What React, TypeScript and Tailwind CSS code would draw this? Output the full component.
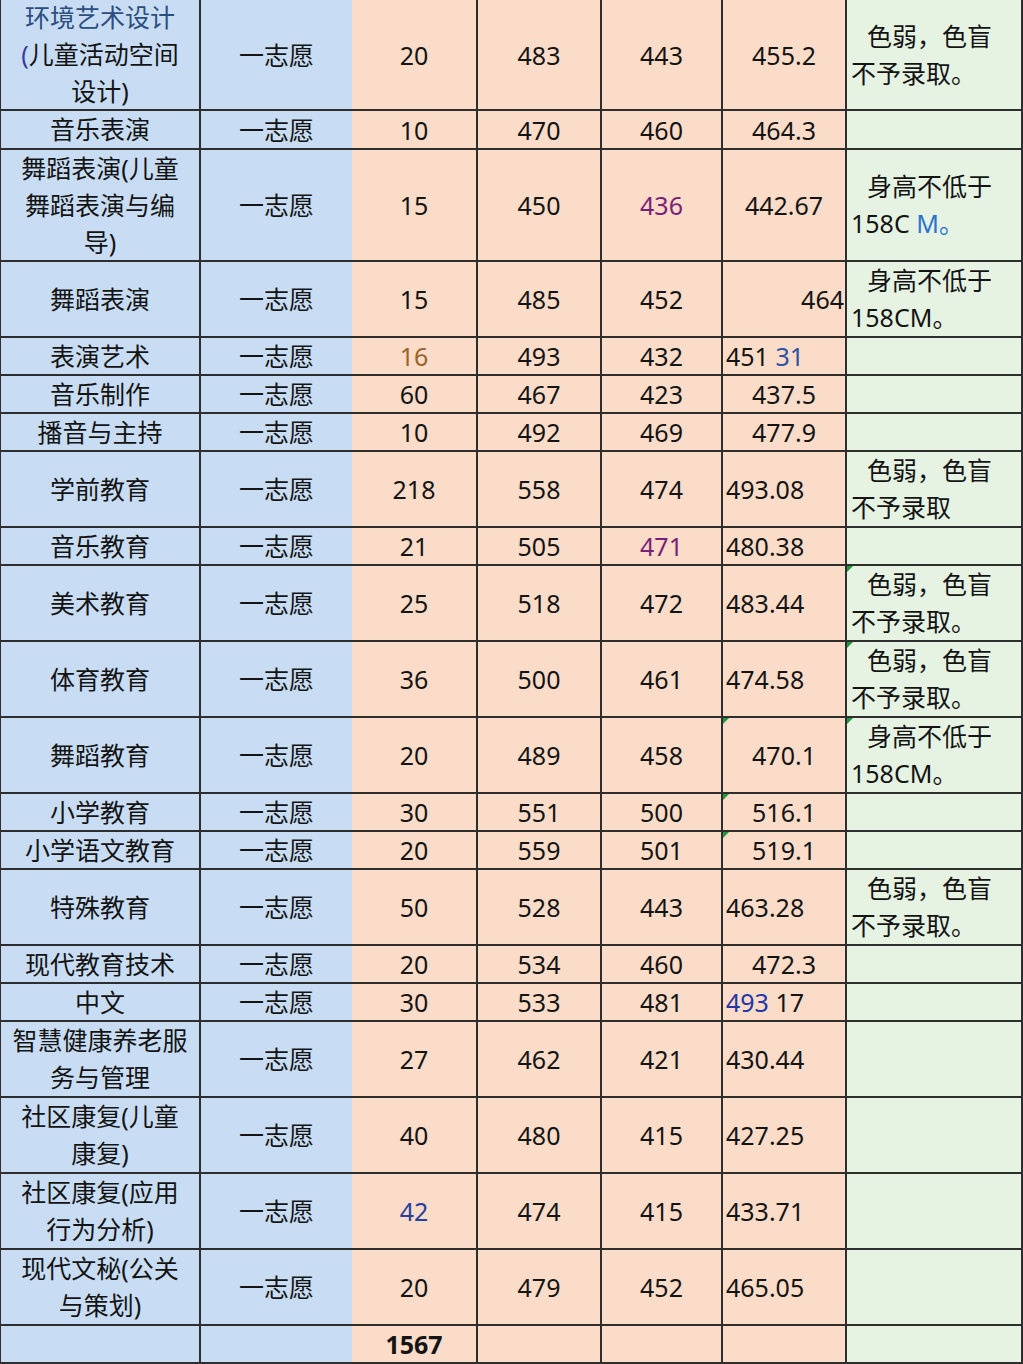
import React from "react";

type Align = "c" | "l" | "r";
type Row = {
  h: string;
  name: React.ReactNode;
  n: React.ReactNode;
  a: React.ReactNode;
  b: React.ReactNode;
  avg: React.ReactNode;
  al: Align;
  note?: React.ReactNode;
  tri6?: boolean;
  tri7?: boolean;
  last?: boolean;
};

const Blue = ({ c, children }: { c: string; children: React.ReactNode }) => (
  <span style={{ color: c }}>{children}</span>
);

const noteColor = (
  <>
    <span className="pl-[16px]">色弱，色盲</span>
    <br />
    不予录取。
  </>
);
const noteColorNoDot = (
  <>
    <span className="pl-[16px]">色弱，色盲</span>
    <br />
    不予录取
  </>
);
const noteHeight = (
  <>
    <span className="pl-[16px]">身高不低于</span>
    <br />
    158CM。
  </>
);

const rows: Row[] = [
  {
    h: "h-[111px]",
    name: (
      <>
        <span className="text-[#2c4d80]">环境艺术设计</span>
        <br />
        <span className="text-[#3a3aa0]">(</span>儿童活动空间
        <br />
        设计)
      </>
    ),
    n: "20",
    a: "483",
    b: "443",
    avg: "455.2",
    al: "c",
    note: noteColor,
  },
  { h: "h-[39px]", name: "音乐表演", n: "10", a: "470", b: "460", avg: "464.3", al: "c" },
  {
    h: "h-[112px]",
    name: (
      <>
        舞蹈表演(儿童
        <br />
        舞蹈表演与编
        <br />
        导)
      </>
    ),
    n: "15",
    a: "450",
    b: <span className="text-[#7a1f7a]">436</span>,
    avg: "442.67",
    al: "c",
    note: (
      <>
        <span className="pl-[16px]">身高不低于</span>
        <br />
        158C <Blue c="#2b72d0">M。</Blue>
      </>
    ),
  },
  { h: "h-[76px]", name: "舞蹈表演", n: "15", a: "485", b: "452", avg: "464", al: "r", note: noteHeight },
  {
    h: "h-[38px]",
    name: "表演艺术",
    n: <span className="text-[#9a6428]">16</span>,
    a: "493",
    b: "432",
    avg: (
      <span>
        451 <Blue c="#2d52a4">31</Blue>
      </span>
    ),
    al: "l",
  },
  { h: "h-[38px]", name: "音乐制作", n: "60", a: "467", b: "423", avg: "437.5", al: "c" },
  { h: "h-[38px]", name: "播音与主持", n: "10", a: "492", b: "469", avg: "477.9", al: "c" },
  { h: "h-[76px]", name: "学前教育", n: "218", a: "558", b: "474", avg: "493.08", al: "l", note: noteColorNoDot },
  {
    h: "h-[38px]",
    name: "音乐教育",
    n: "21",
    a: "505",
    b: <span className="text-[#7a1f7a]">471</span>,
    avg: "480.38",
    al: "l",
  },
  { h: "h-[76px]", name: "美术教育", n: "25", a: "518", b: "472", avg: "483.44", al: "l", note: noteColor, tri7: true },
  { h: "h-[76px]", name: "体育教育", n: "36", a: "500", b: "461", avg: "474.58", al: "l", note: noteColor, tri7: true },
  { h: "h-[76px]", name: "舞蹈教育", n: "20", a: "489", b: "458", avg: "470.1", al: "c", note: noteHeight, tri6: true, tri7: true },
  { h: "h-[38px]", name: "小学教育", n: "30", a: "551", b: "500", avg: "516.1", al: "c", tri6: true },
  { h: "h-[38px]", name: "小学语文教育", n: "20", a: "559", b: "501", avg: "519.1", al: "c", tri6: true },
  { h: "h-[76px]", name: "特殊教育", n: "50", a: "528", b: "443", avg: "463.28", al: "l", note: noteColor },
  { h: "h-[38px]", name: "现代教育技术", n: "20", a: "534", b: "460", avg: "472.3", al: "c" },
  {
    h: "h-[38px]",
    name: "中文",
    n: "30",
    a: "533",
    b: "481",
    avg: (
      <span>
        <Blue c="#2436a8">493</Blue> 17
      </span>
    ),
    al: "l",
  },
  {
    h: "h-[76px]",
    name: (
      <>
        智慧健康养老服
        <br />
        务与管理
      </>
    ),
    n: "27",
    a: "462",
    b: "421",
    avg: "430.44",
    al: "l",
  },
  {
    h: "h-[76px]",
    name: (
      <>
        社区康复(儿童
        <br />
        康复)
      </>
    ),
    n: "40",
    a: "480",
    b: "415",
    avg: "427.25",
    al: "l",
  },
  {
    h: "h-[76px]",
    name: (
      <>
        社区康复(应用
        <br />
        行为分析)
      </>
    ),
    n: <span className="text-[#2440a0]">42</span>,
    a: "474",
    b: "415",
    avg: "433.71",
    al: "l",
  },
  {
    h: "h-[76px]",
    name: (
      <>
        现代文秘(公关
        <br />
        与策划)
      </>
    ),
    n: "20",
    a: "479",
    b: "452",
    avg: "465.05",
    al: "l",
  },
  {
    h: "h-[38px]",
    name: "",
    n: <span className="font-bold">1567</span>,
    a: "",
    b: "",
    avg: "",
    al: "c",
    last: true,
  },
];

const Tri = () => (
  <svg className="absolute left-0 top-0" width="6" height="6" viewBox="0 0 6 6">
    <polygon points="0,0 6,0 0,6" fill="#1e9a3a" />
  </svg>
);

export default function App() {
  return (
    <div className="w-[1023px] h-[1364px] overflow-hidden bg-white text-[#141414] text-[25px] leading-[30px] font-['Noto_Sans','Noto_Sans_CJK_SC',sans-serif]">
      {rows.map((r, i) => (
        <div
          key={i}
          className={`grid grid-cols-[201px_151px_126px_124px_121px_124px_176px] grid-rows-1 overflow-hidden ${r.h}`}
        >
          <div className="flex min-h-0 items-center justify-center text-center leading-[37px] bg-[#c8ddf3] border-l border-r-2 border-b-2 border-[#2e2e2e]">
            <div>{r.name}</div>
          </div>
          <div className="flex min-h-0 items-center justify-center bg-[#c8ddf3] border-b-2 border-[#2e2e2e]">
            {r.last ? "" : "一志愿"}
          </div>
          <div className="flex min-h-0 items-center justify-center bg-[#fadcc8] border-r-2 border-b-2 border-[#2e2e2e]">
            {r.n}
          </div>
          <div className="flex min-h-0 items-center justify-center bg-[#fadcc8] border-r-2 border-b-2 border-[#2e2e2e]">
            {r.a}
          </div>
          <div className="flex min-h-0 items-center justify-center bg-[#fadcc8] border-r-2 border-b-2 border-[#2e2e2e]">
            {r.b}
          </div>
          <div
            className={`relative flex min-h-0 items-center bg-[#fadcc8] border-r-2 border-b-2 border-[#2e2e2e] ${
              r.al === "c" ? "justify-center" : r.al === "l" ? "justify-start pl-[3px]" : "justify-end pr-[1px]"
            }`}
          >
            {r.tri6 && <Tri />}
            {r.avg}
          </div>
          <div className="relative flex min-h-0 items-center bg-[#e6f2e2] border-r-2 border-b-2 border-[#2e2e2e] pl-[4px] leading-[37px] whitespace-nowrap">
            {r.tri7 && <Tri />}
            <div>{r.note}</div>
          </div>
        </div>
      ))}
    </div>
  );
}
